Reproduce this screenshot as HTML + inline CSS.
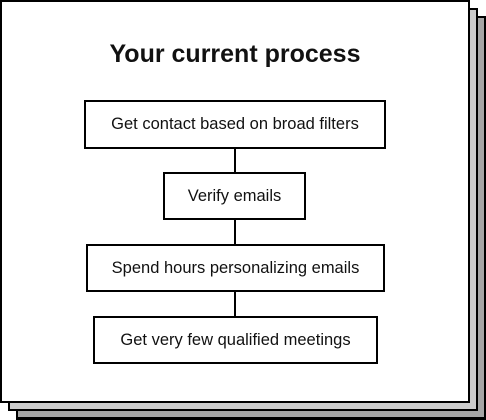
<!DOCTYPE html>
<html><head><style>
body{margin:0;width:486px;height:420px;position:relative;background:#fff;font-family:"Liberation Sans",sans-serif;overflow:hidden}
.c{position:absolute;box-sizing:border-box;border:2px solid #000}
.b{position:absolute;box-sizing:border-box;border:2px solid #000;background:#fff;display:flex;align-items:center;justify-content:center;font-size:16.5px;color:#111;white-space:nowrap}
.l{position:absolute;left:234px;width:2px;background:#000}
</style></head><body>
<div class="c" style="left:16px;top:16px;width:470px;height:404px;background:#a6a6a6;border-bottom-width:3px"></div>
<div class="c" style="left:8px;top:8px;width:470px;height:403px;background:#cccccc"></div>
<div class="c" style="left:0;top:0;width:470px;height:403px;background:#fff"></div>
<div style="position:absolute;left:0;width:470px;top:40px;text-align:center;font-weight:bold;font-size:25px;color:#111">Your current process</div>
<div class="l" style="top:148px;height:26px"></div>
<div class="l" style="top:219px;height:27px"></div>
<div class="l" style="top:291px;height:27px"></div>
<div class="b" style="left:84px;top:100px;width:302px;height:49px">Get contact based on broad filters</div>
<div class="b" style="left:163px;top:172px;width:143px;height:48px">Verify emails</div>
<div class="b" style="left:86px;top:244px;width:299px;height:48px">Spend hours personalizing emails</div>
<div class="b" style="left:93px;top:316px;width:285px;height:48px">Get very few qualified meetings</div>
</body></html>
